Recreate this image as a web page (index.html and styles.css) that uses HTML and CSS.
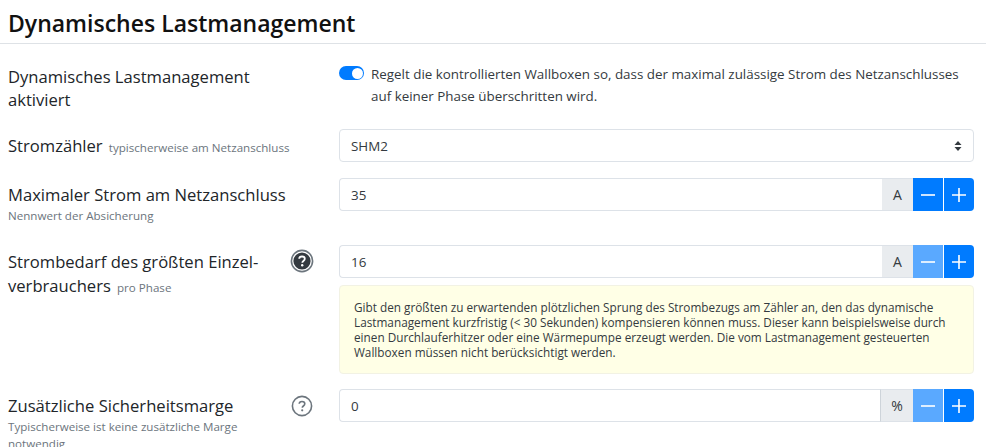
FILE: index.html
```html
<!DOCTYPE html>
<html lang="de">
<head>
<meta charset="utf-8">
<title>Dynamisches Lastmanagement</title>
<link rel="stylesheet" href="styles.css">
</head>
<body>
<header class="page-head"><h1>Dynamisches Lastmanagement</h1></header>
<main class="form">
  <div class="row row-switch">
    <div class="label"><div class="label-text flush"><span class="title">Dynamisches Lastmanagement aktiviert</span></div></div>
    <div class="field switch-field">
      <span class="switch"><span class="knob"></span></span>
      <p class="switch-text">Regelt die kontrollierten Wallboxen so, dass der maximal zulässige Strom des Netzanschlusses auf keiner Phase überschritten wird.</p>
    </div>
  </div>
  <div class="row">
    <div class="label label-mid"><div class="label-text"><span class="title">Stromzähler</span> <small>typischerweise am Netzanschluss</small></div></div>
    <div class="field">
      <div class="control select"><span>SHM2</span>
        <svg class="caret" width="8" height="12" viewBox="0 0 8 12"><path d="M4 1 7.5 5H.5zM4 11 .5 7h7z" fill="#343a40"/></svg>
      </div>
    </div>
  </div>
  <div class="row row-max">
    <div class="label"><div class="label-text"><span class="title">Maximaler Strom am Netzanschluss</span><small class="block">Nennwert der Absicherung</small></div></div>
    <div class="field">
      <div class="group">
        <div class="control grow">35</div><div class="unit">A</div>
        <button class="btn"><svg width="16" height="16" viewBox="0 0 16 16"><path d="M1 8h14" stroke="#fff" stroke-width="1.6"/></svg></button>
        <button class="btn last"><svg width="16" height="16" viewBox="0 0 16 16"><path d="M1 8h14M8 1v14" stroke="#fff" stroke-width="1.6"/></svg></button>
      </div>
    </div>
  </div>
  <div class="row row-tall">
    <div class="label"><div class="label-text wrap"><span class="title">Strombedarf des größten Einzel-<br>verbrauchers</span> <small>pro Phase</small></div>
      <svg class="help" width="24" height="24" viewBox="0 0 24 24"><circle cx="12" cy="12" r="10.6" fill="#fff" stroke="#6c757d" stroke-width="1.6"/><circle cx="12" cy="12" r="8.6" fill="#343a40"/><path d="M9.2 9.8C9.3 8.2 10.5 7.5 12 7.5c1.6 0 2.8.9 2.8 2.3 0 1.1-.6 1.6-1.4 2.2-.8.6-1.100.9-1.100 1.700" fill="none" stroke="#fff" stroke-width="1.8"/><circle cx="12.200" cy="16.300" r="1.200" fill="#fff"/></svg>
    </div>
    <div class="field">
      <div class="group">
        <div class="control grow">16</div><div class="unit">A</div>
        <button class="btn muted"><svg width="16" height="16" viewBox="0 0 16 16"><path d="M1 8h14" stroke="#fff" stroke-width="1.6"/></svg></button>
        <button class="btn last"><svg width="16" height="16" viewBox="0 0 16 16"><path d="M1 8h14M8 1v14" stroke="#fff" stroke-width="1.6"/></svg></button>
      </div>
      <div class="note">Gibt den größten zu erwartenden plötzlichen Sprung des Strombezugs am Zähler an, den das dynamische Lastmanagement kurzfristig (&lt; 30 Sekunden) kompensieren können muss. Dieser kann beispielsweise durch einen Durchlauferhitzer oder eine Wärmepumpe erzeugt werden. Die vom Lastmanagement gesteuerten Wallboxen müssen nicht berücksichtigt werden.</div>
    </div>
  </div>
  <div class="row">
    <div class="label"><div class="label-text wrap"><span class="title">Zusätzliche Sicherheitsmarge</span><small class="block">Typischerweise ist keine zusätzliche Marge notwendig</small></div>
      <svg class="help help-outline" width="24" height="24" viewBox="0 0 24 24"><circle cx="12" cy="12" r="9.6" fill="#fff" stroke="#6c757d" stroke-width="1.6"/><path d="M9.2 9.8C9.3 8.2 10.5 7.5 12 7.5c1.6 0 2.8.9 2.8 2.3 0 1.1-.6 1.6-1.4 2.2-.8.6-1.100.9-1.100 1.700" fill="none" stroke="#6c757d" stroke-width="1.6"/><circle cx="12.200" cy="16.300" r="1.100" fill="#6c757d"/></svg>
    </div>
    <div class="field">
      <div class="group">
        <div class="control grow">0</div><div class="unit pct">%</div>
        <button class="btn muted"><svg width="16" height="16" viewBox="0 0 16 16"><path d="M1 8h14" stroke="#fff" stroke-width="1.6"/></svg></button>
        <button class="btn last"><svg width="16" height="16" viewBox="0 0 16 16"><path d="M1 8h14M8 1v14" stroke="#fff" stroke-width="1.6"/></svg></button>
      </div>
    </div>
  </div>
</main>
</body>
</html>
```
FILE: styles.css
```css
* { box-sizing: border-box; }
html, body { height: 100%; }
body {
  margin: 0;
  overflow: hidden;
  background: #fff;
  color: #212529;
  font-family: "Open Sans", "Noto Sans", sans-serif;
}
.page-head {
  width: 986px;
  height: 44px;
  padding: 0 0 0 8px;
  border-bottom: 1px solid #dee2e6;
}
h1 {
  margin: 0;
  font-size: 23px;
  line-height: 46px;
  font-weight: 600;
  color: #111;
}
.form { padding: 21px 0 0 8px; }
.row {
  display: grid;
  grid-template-columns: 305px 635px;
  column-gap: 26px;
  margin-bottom: 16px;
}
.row-switch { margin-bottom: 18px; }
.row-max { margin-bottom: 24px; height: 43px; }
.row-tall { margin-bottom: 15px; }
.label { display: flex; justify-content: space-between; align-items: flex-start; min-height: 33px; }
.label-text { padding-top: 5px; line-height: 23px; }
.label-text.flush { padding-top: 0; }
.label-mid { align-items: center; }
.label-mid .label-text { padding-top: 2px; }
.title { font-size: 16.600px; color: #212529; }
.row-switch .title { display: block; width: 270px; }
small { font-size: 11.600px; color: #6c757d; margin-left: 2px; }
small.block { display: block; margin-left: 0; line-height: 17px; }
.wrap { width: 275px; }
.help { margin-top: 4px; margin-right: -1px; flex: none; }
.help-outline { margin-top: 5px; }
.field { min-width: 0; }
.switch-field { display: flex; gap: 7px; align-items: flex-start; }
.switch {
  flex: none;
  width: 25px;
  height: 14px;
  margin-top: 1px;
  border-radius: 7px;
  background: #007bff;
  display: flex;
  justify-content: flex-end;
  align-items: center;
  padding-right: 1.500px;
}
.knob { width: 11px; height: 11px; border-radius: 50%; background: #fff; }
.switch-text {
  margin: -1px 0 0;
  width: 603px;
  font-size: 13.400px;
  line-height: 21.500px;
  color: #343a40;
}
.control {
  height: 33px;
  padding: 0 11px;
  display: flex;
  align-items: center;
  background: #fff;
  border: 1px solid #dde2e8;
  border-radius: 4px;
  font-size: 13.400px;
  color: #343a40;
}
.select { justify-content: space-between; width: 635px; }
.group { display: flex; height: 33px; }
.grow { flex: 1; border-radius: 4px 0 0 4px; border-right: 0; }
.unit {
  flex: none;
  width: 31px;
  display: flex;
  align-items: center;
  justify-content: center;
  background: #e9ecef;
  border: 1px solid #dde2e8;
  border-width: 1px 0;
  font-size: 14px;
  color: #343a40;
}
.unit.pct { width: 33px; border-left: 1px solid #ced4da; }
.btn {
  flex: none;
  width: 30px;
  padding: 0;
  margin: 0;
  border: 0;
  background: #007bff;
  display: flex;
  align-items: center;
  justify-content: center;
}
.btn.last { width: 30px; margin-left: 1px; border-radius: 0 4px 4px 0; }
.btn.muted { background: #5aa9ff; }
.note {
  margin-top: 7px;
  height: 89px;
  padding: 14px 20px 14px 14px;
  background: #ffffe6;
  border: 1px solid #f2f2e4;
  border-radius: 4px;
  font-size: 11.770px;
  line-height: 15px;
  color: #343a40;
}
```
